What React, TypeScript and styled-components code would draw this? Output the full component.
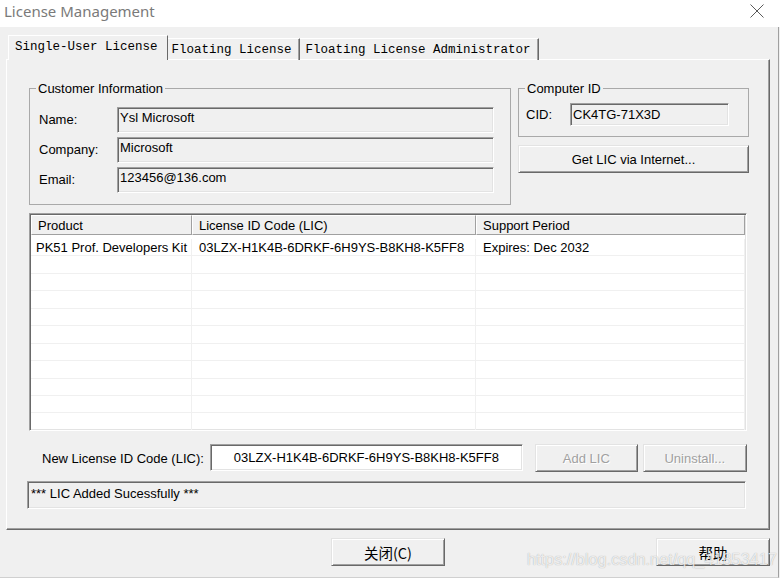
import React from "react";
import styled, { createGlobalStyle, css } from "styled-components";

const GlobalStyle = createGlobalStyle`
  html, body { margin: 0; padding: 0; background: #f0f0f0; }
  body {
    font-family: "Liberation Sans", Arial, sans-serif;
    font-size: 13px;
    color: #000;
  }
  * { box-sizing: border-box; }
`;

/* classic 3D edges */
const sunken = css`
  border-style: solid;
  border-width: 1px;
  border-color: #a0a0a0 #ffffff #ffffff #a0a0a0;
  box-shadow: inset 1px 1px 0 #696969, inset -1px -1px 0 #e3e3e3;
`;

const raised = css`
  border-style: solid;
  border-width: 1px;
  border-color: #e3e3e3 #696969 #696969 #e3e3e3;
  box-shadow: inset 1px 1px 0 #ffffff, inset -1px -1px 0 #a0a0a0;
`;

const Window = styled.div`
  position: relative;
  width: 780px;
  height: 578px;
  display: flex;
  flex-direction: column;
  background: #f0f0f0;
  overflow: hidden;
`;

const TitleBar = styled.div`
  flex: none;
  height: 27px;
  padding: 0 16px 5px 4px;
  background: #ffffff;
  display: flex;
  align-items: center;
  justify-content: space-between;
`;

const Title = styled.span`
  font-family: "Noto Sans", "Open Sans", sans-serif;
  font-size: 15px;
  color: #7a7a7a;
`;

const Body = styled.div`
  flex: 1;
  width: 779px;
  display: flex;
  flex-direction: column;
  padding: 8px 0 0 6px;
  border-right: 1px solid #a0a0a0;
  border-bottom: 1px solid #d0d0d0;
`;

const TabStrip = styled.div`
  position: relative;
  z-index: 1;
  height: 25px;
  margin: 0 0 -1px 2px;
  display: flex;
  align-items: flex-end;
`;

const Tab = styled.div<{ $active?: boolean }>`
  position: relative;
  display: flex;
  align-items: center;
  font-family: "Liberation Mono", "Courier New", monospace;
  font-size: 12.5px;
  white-space: nowrap;
  border-top: 1px solid #ffffff;
  border-right: 1px solid #696969;
  ${(p) =>
    p.$active
      ? css`
          z-index: 2;
          height: 25px;
          margin-right: -2px;
          padding: 0 9px 2px 6px;
          border-left: 1px solid #ffffff;
          background: #f0f0f0;
        `
      : css`
          height: 22px;
          padding: 0 7px 0 6px;
          background: transparent;
          box-shadow: inset -1px 0 0 #a0a0a0;
        `}
`;

const Panel = styled.div`
  width: 764px;
  height: 471px;
  padding: 21px 0 0 22px;
  display: flex;
  flex-direction: column;
  border: 1px solid;
  border-color: #ffffff #696969 #696969 #ffffff;
  box-shadow: inset -1px -1px 0 #a0a0a0;
`;

const TopSection = styled.div`
  display: grid;
  grid-template-columns: 482px 231px;
  column-gap: 7px;
  align-items: start;
`;

const Group = styled.fieldset`
  margin: 0;
  padding: 0;
  min-width: 0;
  border: 1px solid #a9a9a9;
`;

const Caption = styled.legend`
  margin-left: 6px;
  padding: 0 2px;
  font-size: 13px;
  line-height: 15px;
`;

const FormGrid = styled.div<{ $cols: string; $pad: string }>`
  display: grid;
  grid-template-columns: ${(p) => p.$cols};
  row-gap: 4px;
  align-items: center;
  padding: ${(p) => p.$pad};
`;

const Label = styled.span`
  white-space: nowrap;
  line-height: 16px;
`;

const ReadField = styled.div<{ $h: number; $pt: number }>`
  ${sunken};
  height: ${(p) => p.$h}px;
  padding: ${(p) => p.$pt}px 2px 0 2px;
  background: #f0f0f0;
  line-height: 16px;
  white-space: nowrap;
  overflow: hidden;
`;

const SideColumn = styled.div`
  display: flex;
  flex-direction: column;
  gap: 8px;
`;

const Button = styled.button<{ $w: number; $disabled?: boolean; $cjk?: boolean }>`
  ${raised};
  width: ${(p) => p.$w}px;
  height: 28px;
  padding: 0;
  background: #f0f0f0;
  font-family: ${(p) =>
    p.$cjk
      ? `"Noto Sans CJK SC", "Liberation Mono", sans-serif`
      : `"Liberation Sans", Arial, sans-serif`};
  font-size: ${(p) => (p.$cjk ? "14.5px" : "13px")};
  color: ${(p) => (p.$disabled ? "#a0a0a0" : "#000")};
  text-shadow: ${(p) => (p.$disabled ? "1px 1px 0 #fff" : "none")};
  cursor: default;
`;

const ListView = styled.div`
  ${sunken};
  margin-top: 8px;
  width: 718px;
  height: 218px;
  padding: 1px;
  background: #ffffff;
  display: flex;
  flex-direction: column;
  overflow: hidden;
`;

const columns = "161px 284px 1fr";

const HeaderRow = styled.div`
  flex: none;
  display: grid;
  grid-template-columns: ${columns};
  height: 20px;
`;

const HeaderCell = styled.div`
  display: flex;
  align-items: center;
  padding-left: 6px;
  background: #f0f0f0;
  border-left: 1px solid #ffffff;
  border-top: 1px solid #ffffff;
  border-right: 1px solid #a0a0a0;
  border-bottom: 1px solid #a0a0a0;
  white-space: nowrap;
`;

const Rows = styled.div`
  padding-top: 4px;
`;

const Row = styled.div`
  display: grid;
  grid-template-columns: ${columns};
  height: 17.45px;
  border-bottom: 1px solid #f0f0f0;
`;

const Cell = styled.div`
  display: flex;
  align-items: center;
  padding-left: 7px;
  border-right: 1px solid #f0f0f0;
  white-space: nowrap;
  overflow: hidden;

  &:first-child {
    padding-left: 5px;
  }
`;

const EntryRow = styled.div`
  margin-top: 13px;
  height: 28px;
  display: flex;
  align-items: flex-start;
`;

const EntryLabel = styled.span`
  margin: 7px 6px 0 13px;
  line-height: 16px;
  white-space: nowrap;
`;

const EntryField = styled.div`
  ${sunken};
  width: 313px;
  height: 27px;
  margin-right: 12px;
  background: #ffffff;
  text-align: center;
  line-height: 25px;
  white-space: nowrap;
`;

const ButtonGap = styled.span`
  width: 5px;
`;

const StatusBox = styled.div`
  ${sunken};
  margin: 9px 0 0 -2px;
  width: 719px;
  height: 28px;
  padding: 4px 3px 0 3px;
  background: #f0f0f0;
  line-height: 16px;
  white-space: nowrap;
`;

const ButtonBar = styled.div`
  margin-top: 8px;
  padding: 0 8px 0 325px;
  display: flex;
  justify-content: space-between;
`;

const Watermark = styled.span`
  position: absolute;
  left: 527px;
  top: 550px;
  font-family: "Liberation Sans", Arial, sans-serif;
  font-size: 16.3px;
  color: rgba(255, 255, 255, 0.8);
  text-shadow: 0 0 1px rgba(0, 0, 0, 0.35);
  white-space: nowrap;
  pointer-events: none;
`;

const CloseIcon = () => (
  <svg width="14" height="14" viewBox="0 0 14 14">
    <path d="M0.5 0.5 L13.5 13.5 M13.5 0.5 L0.5 13.5" stroke="#5a5a5a" strokeWidth="1" fill="none" />
  </svg>
);

const customer = [
  { label: "Name:", value: "Ysl Microsoft" },
  { label: "Company:", value: "Microsoft" },
  { label: "Email:", value: "123456@136.com" },
];

const licenses = [
  {
    product: "PK51 Prof. Developers Kit",
    lic: "03LZX-H1K4B-6DRKF-6H9YS-B8KH8-K5FF8",
    period: "Expires: Dec 2032",
  },
];

const ROW_COUNT = 11;

export default function App() {
  const rows = Array.from({ length: ROW_COUNT }, (_, i) => licenses[i]);
  return (
    <>
      <GlobalStyle />
      <Window>
        <TitleBar>
          <Title>License Management</Title>
          <CloseIcon />
        </TitleBar>
        <Body>
          <TabStrip>
            <Tab $active>Single-User License</Tab>
            <Tab>Floating License</Tab>
            <Tab>Floating License Administrator</Tab>
          </TabStrip>
          <Panel>
            <TopSection>
              <Group>
                <Caption>Customer Information</Caption>
                <FormGrid $cols="78px 377px" $pad="11px 0 11px 9px">
                  {customer.map((c) => (
                    <React.Fragment key={c.label}>
                      <Label>{c.label}</Label>
                      <ReadField $h={26} $pt={2}>
                        {c.value}
                      </ReadField>
                    </React.Fragment>
                  ))}
                </FormGrid>
              </Group>
              <SideColumn>
                <Group>
                  <Caption>Computer ID</Caption>
                  <FormGrid $cols="44px 159px" $pad="7px 0 10px 7px">
                    <Label>CID:</Label>
                    <ReadField $h={23} $pt={3}>
                      CK4TG-71X3D
                    </ReadField>
                  </FormGrid>
                </Group>
                <Button $w={231}>Get LIC via Internet...</Button>
              </SideColumn>
            </TopSection>

            <ListView>
              <HeaderRow>
                <HeaderCell>Product</HeaderCell>
                <HeaderCell>License ID Code (LIC)</HeaderCell>
                <HeaderCell>Support Period</HeaderCell>
              </HeaderRow>
              <Rows>
                {rows.map((r, i) => (
                  <Row key={i}>
                    <Cell>{r?.product}</Cell>
                    <Cell>{r?.lic}</Cell>
                    <Cell>{r?.period}</Cell>
                  </Row>
                ))}
              </Rows>
            </ListView>

            <EntryRow>
              <EntryLabel>New License ID Code (LIC):</EntryLabel>
              <EntryField>03LZX-H1K4B-6DRKF-6H9YS-B8KH8-K5FF8</EntryField>
              <Button $w={103} $disabled>
                Add LIC
              </Button>
              <ButtonGap />
              <Button $w={104} $disabled>
                Uninstall...
              </Button>
            </EntryRow>

            <StatusBox>*** LIC Added Sucessfully ***</StatusBox>
          </Panel>
          <ButtonBar>
            <Button $w={114} $cjk>
              关闭(C)
            </Button>
            <Button $w={114} $cjk>
              帮助
            </Button>
          </ButtonBar>
        </Body>
        <Watermark>https://blog.csdn.net/qq_41853417</Watermark>
      </Window>
    </>
  );
}
